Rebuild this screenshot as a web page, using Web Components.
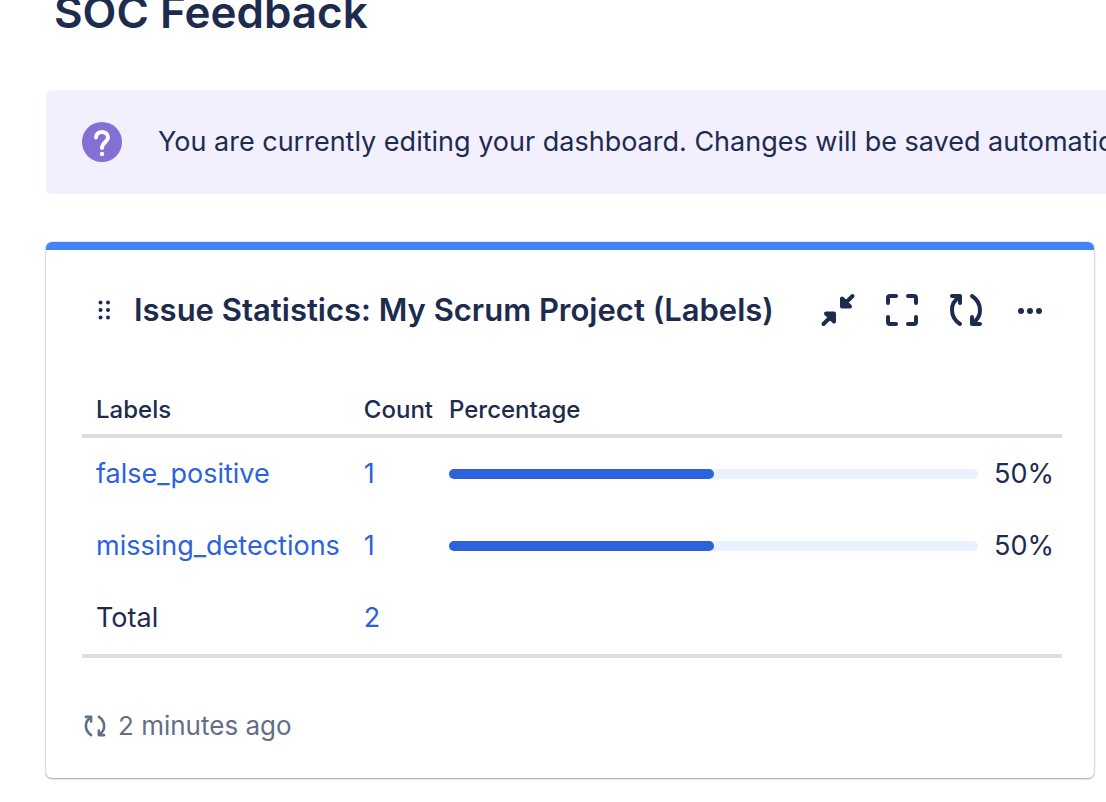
<!DOCTYPE html>
<html lang="en">
<head>
<meta charset="utf-8">
<title>SOC Feedback</title>
<style>
  body { margin: 0; background: #fff; color: #1d2b4f; font-family: Inter, "Liberation Sans", sans-serif; font-size: 27px; overflow-x: hidden; }
</style>
</head>
<body>
<dashboard-page>
  <h1 slot="title">SOC Feedback</h1>
  <info-banner>You are currently editing your dashboard. Changes will be saved automatically.</info-banner>
  <gadget-card>
    <span slot="title">Issue Statistics: My Scrum Project (Labels)</span>
    <stats-table></stats-table>
    <span slot="updated">2 minutes ago</span>
  </gadget-card>
</dashboard-page>

<script>
const icons = {
  collapse: '<path d="M852.500 296 844 304.500M842 298.500V306.500H850Z" fill="currentColor"/><path d="M823.500 324 832 315.500M834 321.500V313.500H826Z" fill="currentColor"/>',
  expand: '<path d="M888 303V298Q888 296 890 296H896M908 296H914Q916 296 916 298V303M916 317V322Q916 324 914 324H908M896 324H890Q888 324 888 322V317"/>',
  refresh: '<path d="M952 296H960V303M959 297.500C949.500 303 949.500 317 960 324M980 324H972V317M973 322.500C982.500 317 982.500 303 972 296"/>',
  more: '<g fill="currentColor" stroke="none"><circle cx="1021" cy="311" r="3"/><circle cx="1030" cy="311" r="3"/><circle cx="1039" cy="311" r="3"/></g>',
  drag: '<g fill="currentColor" stroke="none"><circle cx="100.500" cy="302.500" r="2"/><circle cx="108" cy="302.500" r="2"/><circle cx="100.500" cy="310" r="2"/><circle cx="108" cy="310" r="2"/><circle cx="100.500" cy="317.500" r="2"/><circle cx="108" cy="317.500" r="2"/></g>'
};
const boxes = { collapse: '818 290 40 40', expand: '882 290 40 40', refresh: '946 290 40 40', more: '1010 290 40 40', drag: '84 290 40 40' };

class UiIcon extends HTMLElement {
  connectedCallback() {
    if (this.shadowRoot) return;
    const n = this.getAttribute('name');
    this.attachShadow({ mode: 'open' }).innerHTML = `
      <style>:host{display:block;width:40px;height:40px} svg{display:block;width:100%;height:100%}</style>
      <svg viewBox="${boxes[n]}" fill="none" stroke="currentColor" stroke-width="4" stroke-linecap="round" stroke-linejoin="round" aria-hidden="true">${icons[n]}</svg>`;
  }
}
class DashboardPage extends HTMLElement {
  constructor() {
    super();
    this.attachShadow({ mode: 'open' }).innerHTML = `
      <style>
        :host{display:flow-root;padding:0 12px 24px 46px}
        ::slotted(h1){margin:-18px 8px 48px !important;font-size:44px;line-height:60px;font-weight:600}
      </style>
      <slot name="title"></slot><slot></slot>`;
  }
}
class InfoBanner extends HTMLElement {
  constructor() {
    super();
    this.attachShadow({ mode: 'open' }).innerHTML = `
      <style>
        :host{display:flex;align-items:center;gap:36px;padding:32px 0 32px 36px;margin:0 -12px 48px 0;background:#f2efff;border-radius:6px 0 0 6px;overflow:hidden;white-space:nowrap;line-height:40px}
        svg{flex:none;width:40px;height:40px}
      </style>
      <svg viewBox="0 0 40 40" aria-hidden="true"><circle cx="20" cy="20" r="20" fill="#8270d4"/>
        <path d="M14 15.500C14 8 26 8 26 15.500C26 20 20 20 20 26" fill="none" stroke="#fff" stroke-width="4" stroke-linecap="round"/><circle cx="20" cy="32" r="2.200" fill="#fff"/></svg>
      <span><slot></slot></span>`;
  }
}
class GadgetCard extends HTMLElement {
  constructor() {
    super();
    this.attachShadow({ mode: 'open' }).innerHTML = `
      <style>
        :host{display:block}
        section{border-top:8px solid #4484fb;border-radius:6px;padding:28px 32px 32px 36px;box-shadow:0 0 1px 1px #091e421a,0 1px 2px #091e4250}
        header{display:flex;align-items:center;height:64px;margin-bottom:44px}
        h2{flex:1;margin:0 0 0 8px;font-size:31px;line-height:40px;font-weight:600;white-space:nowrap}
        button{display:flex;align-items:center;justify-content:center;flex:none;width:64px;height:64px;padding:0;border:0;background:none;color:inherit;cursor:pointer}
        .drag{width:44px;cursor:grab}
        footer{display:flex;align-items:center;gap:10px;margin-top:48px;color:#626f86;font-size:26px;line-height:40px}
        footer ui-icon{width:26px;height:26px}
      </style>
      <section>
        <header>
          <button class="drag" aria-label="Move gadget"><ui-icon name="drag"></ui-icon></button>
          <h2><slot name="title"></slot></h2>
          <button aria-label="Minimize"><ui-icon name="collapse"></ui-icon></button>
          <button aria-label="Maximize"><ui-icon name="expand"></ui-icon></button>
          <button aria-label="Refresh"><ui-icon name="refresh"></ui-icon></button>
          <button aria-label="More actions"><ui-icon name="more"></ui-icon></button>
        </header>
        <slot></slot>
        <footer><ui-icon name="refresh"></ui-icon><slot name="updated"></slot></footer>
      </section>`;
  }
}
class PercentBar extends HTMLElement {
  connectedCallback() {
    if (this.shadowRoot) return;
    const v = this.getAttribute('value');
    this.attachShadow({ mode: 'open' }).innerHTML = `
      <style>
        :host{display:flex;align-items:center;gap:16px}
        .track{flex:1;height:10px;border-radius:5px;background:#e9f0fe}
        .fill{width:${v}%;height:10px;border-radius:5px;background:#2c63dc}
      </style>
      <div class="track"><div class="fill"></div></div><span>${v}%</span>`;
  }
}
class StatsTable extends HTMLElement {
  constructor() {
    super();
    this.attachShadow({ mode: 'open' }).innerHTML = `
      <style>
        :host{display:block}
        table{width:100%;border-collapse:separate;border-spacing:0;border-bottom:4px solid #dcdde3}
        th,td{padding:0 16px 0 0;text-align:left;white-space:nowrap}
        th{height:48px;font-size:24px;line-height:32px;font-weight:500;border-bottom:4px solid #dcdde3}
        td{height:72px;line-height:40px}
        th:first-child,td:first-child{padding:0 24px 0 14px}
        th:last-child,td:last-child{width:100%;padding-right:8px}
        a{color:#2c63dc;text-decoration:none}
      </style>
      <table>
        <thead><tr><th scope="col">Labels</th><th scope="col">Count</th><th scope="col">Percentage</th></tr></thead>
        <tbody>
          <tr><td><a href="#false_positive">false_positive</a></td><td><a href="#false_positive">1</a></td><td><percent-bar value="50"></percent-bar></td></tr>
          <tr><td><a href="#missing_detections">missing_detections</a></td><td><a href="#missing_detections">1</a></td><td><percent-bar value="50"></percent-bar></td></tr>
          <tr><td>Total</td><td><a href="#all">2</a></td><td></td></tr>
        </tbody>
      </table>`;
  }
}
customElements.define('ui-icon', UiIcon);
customElements.define('percent-bar', PercentBar);
customElements.define('stats-table', StatsTable);
customElements.define('gadget-card', GadgetCard);
customElements.define('info-banner', InfoBanner);
customElements.define('dashboard-page', DashboardPage);
</script>
</body>
</html>
